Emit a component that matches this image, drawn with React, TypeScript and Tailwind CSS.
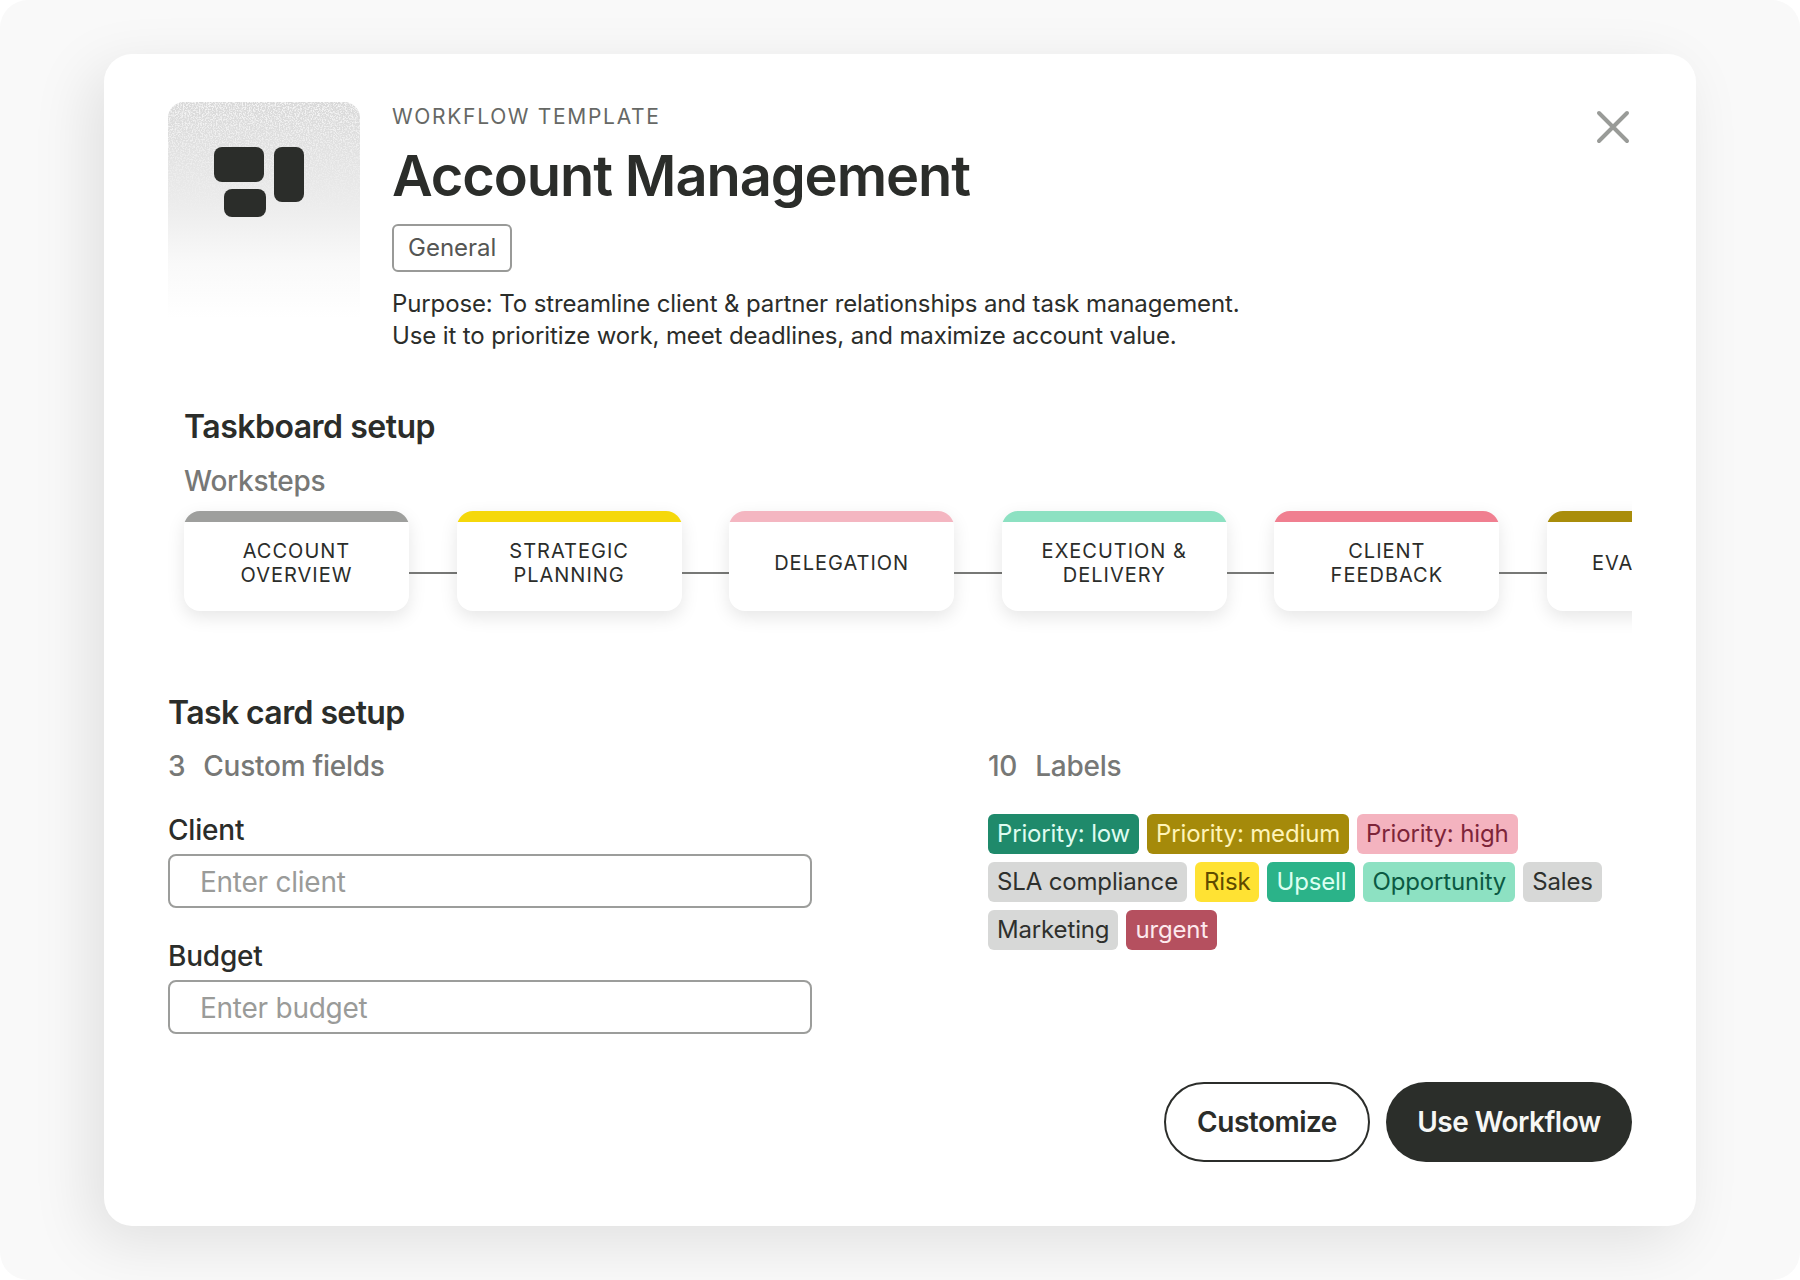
import React from 'react';

const steps = [
  { name: ['ACCOUNT', 'OVERVIEW'], bar: 'bg-[#9e9f9d]' },
  { name: ['STRATEGIC', 'PLANNING'], bar: 'bg-[#f5d80b]' },
  { name: ['DELEGATION'], bar: 'bg-[#f4b6c1]' },
  { name: ['EXECUTION &', 'DELIVERY'], bar: 'bg-[#8de1c2]' },
  { name: ['CLIENT', 'FEEDBACK'], bar: 'bg-[#f07f90]' },
  { name: ['EVALUATION'], bar: 'bg-[#a98d0b]' },
];

const labels = [
  { text: 'Priority: low', cls: 'bg-[#1f8a6b] text-[#dffcf0]' },
  { text: 'Priority: medium', cls: 'bg-[#a58a0a] text-[#fff4b8]' },
  { text: 'Priority: high', cls: 'bg-[#f4b3bf] text-[#7d2439]' },
  { text: 'SLA compliance', cls: 'bg-[#d7d8d7] text-[#2e302d]' },
  { text: 'Risk', cls: 'bg-[#ffe233] text-[#5f4b00]' },
  { text: 'Upsell', cls: 'bg-[#2bb389] text-[#dcfff1]' },
  { text: 'Opportunity', cls: 'bg-[#8de1c2] text-[#0b5a43]' },
  { text: 'Sales', cls: 'bg-[#d7d8d7] text-[#2e302d]' },
  { text: 'Marketing', cls: 'bg-[#d7d8d7] text-[#2e302d]' },
  { text: 'urgent', cls: 'bg-[#b5505f] text-[#fde9ed]' },
];

const TemplateIcon = () => (
  <svg className="w-[192px] h-[216px] shrink-0 rounded-t-2xl" viewBox="0 0 192 216">
    <defs>
      <linearGradient id="fade" x1="0" y1="0" x2="0" y2="1">
        <stop offset="0" stopColor="#d8d8d8" />
        <stop offset="0.45" stopColor="#ebebeb" />
        <stop offset="0.75" stopColor="#f9f9f9" />
        <stop offset="1" stopColor="#ffffff" />
      </linearGradient>
      <linearGradient id="grainFade" x1="0" y1="0" x2="0" y2="1">
        <stop offset="0" stopColor="#fff" />
        <stop offset="0.55" stopColor="#000" />
      </linearGradient>
      <mask id="grainMask">
        <rect width="192" height="216" fill="url(#grainFade)" />
      </mask>
      <filter id="grain" x="0" y="0" width="100%" height="100%">
        <feTurbulence type="fractalNoise" baseFrequency="0.7" numOctaves="3" seed="4" />
        <feColorMatrix values="0 0 0 0 1  0 0 0 0 1  0 0 0 0 1  0 0 0 4 -1.7" />
      </filter>
    </defs>
    <rect width="192" height="216" fill="url(#fade)" />
    <g mask="url(#grainMask)">
      <rect width="192" height="216" filter="url(#grain)" opacity="0.75" />
    </g>
    <rect x="46" y="45" width="50" height="35" rx="8" fill="#2b2d2a" />
    <rect x="106" y="45" width="30" height="55" rx="8" fill="#2b2d2a" />
    <rect x="56" y="87" width="42" height="28" rx="8" fill="#2b2d2a" />
  </svg>
);

const Field = ({ label, placeholder }: { label: string; placeholder: string }) => (
  <div>
    <div className="text-[28px] leading-[34px] font-medium tracking-[-0.2px] text-[#2b2d2a]">{label}</div>
    <input
      readOnly
      placeholder={placeholder}
      className="mt-[7px] w-full h-[54px] rounded-lg border-2 border-[#9c9d9b] bg-white px-[30px] pt-[2px] text-[28px] tracking-[-0.25px] placeholder:text-[#9a9b99] outline-none"
    />
  </div>
);

export default function App() {
  return (
    <div className="w-[1800px] h-[1280px] overflow-hidden rounded-[28px] bg-[#f9f9f9] pt-[54px] pl-[104px] font-['Inter',sans-serif] text-[#2b2d2a]">
      <div className="w-[1592px] h-[1172px] rounded-[28px] bg-white px-[64px] pt-[48px] shadow-[-14px_16px_60px_rgba(0,0,0,0.1)]">
        {/* Header */}
        <div className="flex h-[216px] gap-[32px]">
          <TemplateIcon />
          <div className="flex-1">
            <div className="mt-[3px] text-[21px] leading-6 tracking-[1.68px] text-[#666865]">WORKFLOW TEMPLATE</div>
            <h1 className="mt-[13px] text-[56px] leading-[68px] font-semibold tracking-[-1.1px]">Account Management</h1>
            <span className="mt-[14px] inline-flex h-[48px] items-center rounded-md border-2 border-[#999a98] px-[14px] text-[24px] text-[#555654]">
              General
            </span>
            <p className="mt-[16px] text-[24px] leading-8 tracking-[-0.12px]">
              Purpose: To streamline client &amp; partner relationships and task management.
              <br />
              Use it to prioritize work, meet deadlines, and maximize account value.
            </p>
          </div>
          <svg className="w-[40px] h-[40px] mt-[5px] ml-[1px] shrink-0 text-[#999b98]" viewBox="0 0 40 40" fill="none" stroke="currentColor" strokeWidth="4" strokeLinecap="round">
            <path d="M7 6 L35 34 M35 6 L7 34" />
          </svg>
        </div>

        {/* Taskboard setup */}
        <h2 className="mt-[89px] ml-[16px] text-[32px] leading-10 font-semibold tracking-[-0.5px]">Taskboard setup</h2>
        <div className="mt-[18px] ml-[16px] text-[28px] leading-8 font-medium tracking-[-0.25px] text-[#777876]">Worksteps</div>
        <div className="overflow-hidden pl-[16px] pt-[20px] pb-[30px] -mt-[6px]">
          <div className="flex w-max items-center">
            {steps.map((step, i) => (
              <React.Fragment key={i}>
                {i > 0 && <div className="w-[47.6px] h-[2px] mt-[24px] bg-[#777876]" />}
                <div className="w-[225px] h-[100px] overflow-hidden rounded-2xl bg-white shadow-[0_6px_18px_rgba(0,0,0,0.1)] flex flex-col">
                  <div className={`h-[11px] shrink-0 ${step.bar}`} />
                  <div className="flex-1 flex flex-col items-center justify-center pb-[8px] text-[20px] leading-6 tracking-[1px]">
                    {step.name.map((line) => (
                      <div key={line}>{line}</div>
                    ))}
                  </div>
                </div>
              </React.Fragment>
            ))}
          </div>
        </div>

        {/* Task card setup */}
        <h2 className="mt-[52px] text-[32px] leading-10 font-semibold tracking-[-0.6px]">Task card setup</h2>
        <div className="mt-[17px] flex">
          <div className="w-[644px]">
            <div className="text-[28px] leading-8 font-medium tracking-[-0.25px] text-[#777876] flex gap-[18px]">
              <span>3</span>
              <span>Custom fields</span>
            </div>
            <div className="mt-[31px] flex flex-col gap-[31px]">
              <Field label="Client" placeholder="Enter client" />
              <Field label="Budget" placeholder="Enter budget" />
            </div>
          </div>
          <div className="ml-[176px] w-[643px]">
            <div className="text-[28px] leading-8 font-medium tracking-[-0.25px] text-[#777876] flex gap-[18px]">
              <span>10</span>
              <span>Labels</span>
            </div>
            <div className="mt-[32px] flex flex-wrap gap-2">
              {labels.map((label) => (
                <span key={label.text} className={`h-[40px] rounded-md px-[9px] text-[24px] leading-[40px] tracking-[-0.15px] ${label.cls}`}>
                  {label.text}
                </span>
              ))}
            </div>
          </div>
        </div>

        {/* Actions */}
        <div className="mt-[48px] flex justify-end gap-4">
          <button className="h-[80px] w-[206px] rounded-full border-2 border-[#2b2d2a] bg-white text-[28px] font-semibold tracking-[-0.5px]">Customize</button>
          <button className="h-[80px] w-[246px] rounded-full bg-[#2b2e2a] text-[28px] font-semibold tracking-[-0.5px] text-[#f6f7f5]">Use Workflow</button>
        </div>
      </div>
    </div>
  );
}
